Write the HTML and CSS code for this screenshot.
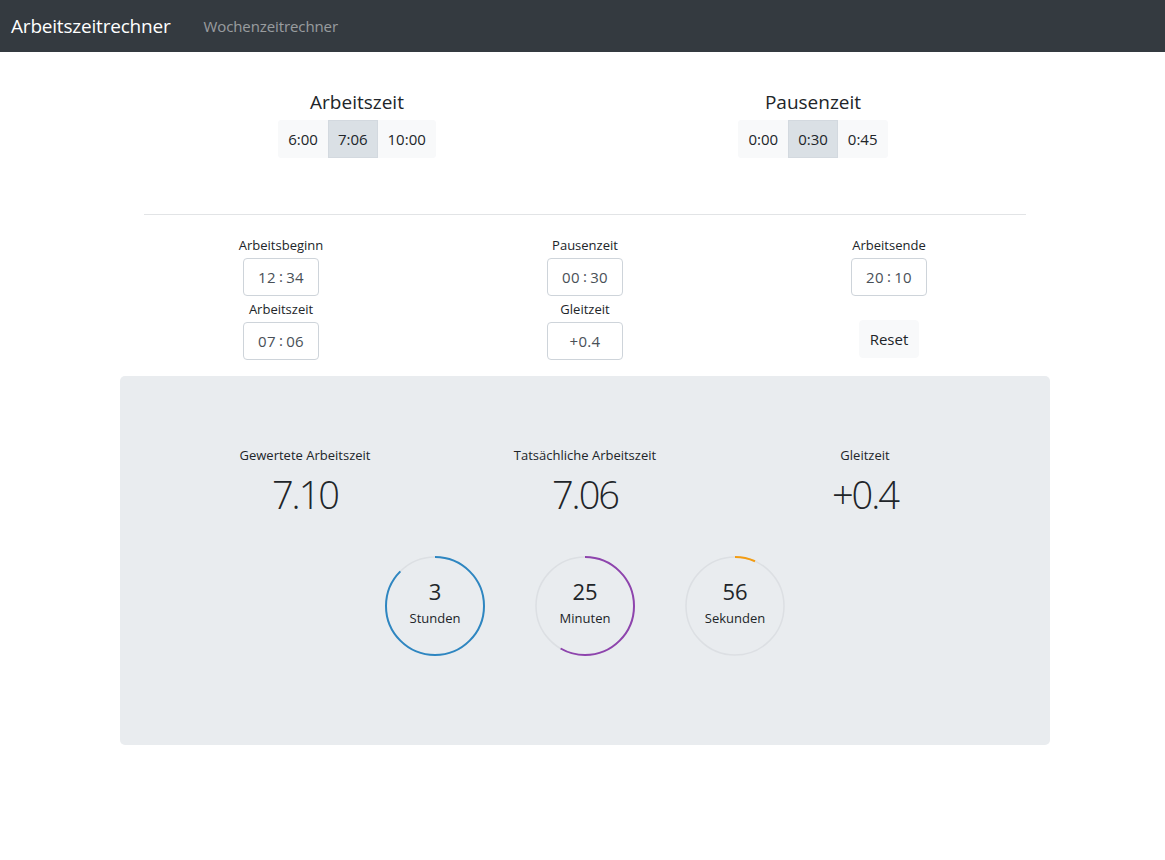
FILE: index.html
```html
<!DOCTYPE html>
<html lang="de">
<head>
<meta charset="utf-8">
<title>Arbeitszeitrechner</title>
<link rel="stylesheet" href="styles.css">
</head>
<body>
<nav class="navbar">
  <a class="brand" href="#">Arbeitszeitrechner</a>
  <a class="nav-link" href="#">Wochenzeitrechner</a>
</nav>

<main class="page">
  <section class="presets">
    <div class="preset">
      <h5 class="preset-title">Arbeitszeit</h5>
      <div class="btn-group">
        <button class="btn">6:00</button>
        <button class="btn active">7:06</button>
        <button class="btn">10:00</button>
      </div>
    </div>
    <div class="preset">
      <h5 class="preset-title">Pausenzeit</h5>
      <div class="btn-group">
        <button class="btn">0:00</button>
        <button class="btn active">0:30</button>
        <button class="btn">0:45</button>
      </div>
    </div>
  </section>

  <hr class="divider">

  <section class="inputs">
    <div class="field-col">
      <label class="field-label">Arbeitsbeginn</label>
      <div class="time-input">12<span class="sep">:</span>34</div>
      <label class="field-label">Arbeitszeit</label>
      <div class="time-input">07<span class="sep">:</span>06</div>
    </div>
    <div class="field-col">
      <label class="field-label">Pausenzeit</label>
      <div class="time-input">00<span class="sep">:</span>30</div>
      <label class="field-label">Gleitzeit</label>
      <div class="time-input">+0.4</div>
    </div>
    <div class="field-col">
      <label class="field-label">Arbeitsende</label>
      <div class="time-input">20<span class="sep">:</span>10</div>
      <button class="btn reset">Reset</button>
    </div>
  </section>

  <section class="result">
    <div class="stats">
      <div class="stat">
        <div class="stat-label">Gewertete Arbeitszeit</div>
        <div class="stat-value">7.10</div>
      </div>
      <div class="stat">
        <div class="stat-label">Tatsächliche Arbeitszeit</div>
        <div class="stat-value">7.06</div>
      </div>
      <div class="stat">
        <div class="stat-label">Gleitzeit</div>
        <div class="stat-value">+0.4</div>
      </div>
    </div>
    <div class="timers">
      <div class="timer">
        <svg class="ring" viewBox="0 0 102 102" width="102" height="102">
          <circle class="track" cx="51" cy="51" r="49"/>
          <circle class="arc arc-blue" cx="51" cy="51" r="49" pathLength="100" stroke-dasharray="87.5 100"/>
        </svg>
        <div class="timer-text"><span class="timer-num">3</span><span class="timer-unit">Stunden</span></div>
      </div>
      <div class="timer">
        <svg class="ring" viewBox="0 0 102 102" width="102" height="102">
          <circle class="track" cx="51" cy="51" r="49"/>
          <circle class="arc arc-purple" cx="51" cy="51" r="49" pathLength="100" stroke-dasharray="58.3 100"/>
        </svg>
        <div class="timer-text"><span class="timer-num">25</span><span class="timer-unit">Minuten</span></div>
      </div>
      <div class="timer">
        <svg class="ring" viewBox="0 0 102 102" width="102" height="102">
          <circle class="track" cx="51" cy="51" r="49"/>
          <circle class="arc arc-orange" cx="51" cy="51" r="49" pathLength="100" stroke-dasharray="6.7 100"/>
        </svg>
        <div class="timer-text"><span class="timer-num">56</span><span class="timer-unit">Sekunden</span></div>
      </div>
    </div>
  </section>
</main>
</body>
</html>
```

FILE: styles.css
```css
* { box-sizing: border-box; }

html, body {
  margin: 0;
  padding: 0;
  background: #fff;
  color: #212529;
  font-family: "Open Sans", "Noto Sans", "Liberation Sans", sans-serif;
  font-size: 16px;
}

.navbar {
  height: 52px;
  background: #343a40;
  display: flex;
  align-items: center;
  padding: 0 0 0 11px;
}

.brand {
  color: #fff;
  font-size: 19px;
  text-decoration: none;
  margin-right: 33px;
  letter-spacing: -0.2px;
}

.nav-link {
  color: rgba(255, 255, 255, 0.5);
  font-size: 15px;
  text-decoration: none;
  letter-spacing: -0.1px;
}

.page {
  width: 930px;
  margin-left: 120px;
}

.presets {
  display: grid;
  grid-template-columns: 456px 456px;
  justify-content: center;
  padding-top: 38px;
}

.preset {
  display: flex;
  flex-direction: column;
  align-items: center;
}

.preset-title {
  margin: 0 0 6px;
  font-size: 19px;
  font-weight: 400;
  line-height: 24px;
}

.btn-group {
  display: flex;
  border-radius: 4px;
  overflow: hidden;
}

.btn {
  font-family: inherit;
  font-size: 15px;
  color: #212529;
  background: #f8f9fa;
  border: 1px solid #f8f9fa;
  height: 38px;
  padding: 0 9px;
  cursor: pointer;
  line-height: 36px;
}

.btn.active {
  background: #dae0e5;
  border-color: #d3d9df;
}

.divider {
  width: 882px;
  margin: 56px auto 20px;
  border: 0;
  border-top: 1px solid #e2e4e6;
}

.inputs {
  display: grid;
  grid-template-columns: repeat(3, 304px);
  justify-content: center;
}

.field-col {
  display: flex;
  flex-direction: column;
  align-items: center;
}

.field-label {
  font-size: 13px;
  line-height: 20px;
  color: #212529;
  margin-bottom: 3px;
}

.time-input {
  width: 76px;
  height: 38px;
  border: 1px solid #ced4da;
  border-radius: 4px;
  background: #fff;
  color: #495057;
  font-size: 15px;
  display: flex;
  align-items: center;
  justify-content: center;
  margin-bottom: 3px;
  letter-spacing: 0.3px;
}

.time-input .sep {
  margin: 0 3px;
  position: relative;
  top: -1px;
}

.btn.reset {
  margin-top: 21px;
  width: 60px;
  padding: 0;
  border-radius: 4px;
}

.result {
  margin-top: 13px;
  background: #e9ecef;
  border-radius: 5px;
  height: 369px;
  padding-top: 69px;
}

.stats {
  display: grid;
  grid-template-columns: repeat(3, 280px);
  justify-content: center;
}

.stat {
  display: flex;
  flex-direction: column;
  align-items: center;
}

.stat-label {
  font-size: 13px;
  line-height: 20px;
}

.stat-value {
  font-size: 38px;
  font-weight: 300;
  line-height: 42px;
  margin-top: 8px;
  letter-spacing: -2px;
}

.timers {
  display: flex;
  justify-content: center;
  gap: 48px;
  margin-top: 40px;
}

.timer {
  position: relative;
  width: 102px;
  height: 102px;
}

.ring {
  display: block;
}

.track {
  fill: none;
  stroke: #dcdfe3;
  stroke-width: 1.5;
}

.arc {
  fill: none;
  stroke-width: 2;
  transform: rotate(-90deg);
  transform-origin: 51px 51px;
}

.arc-blue { stroke: #2e86c1; }
.arc-purple { stroke: #8e44ad; }
.arc-orange { stroke: #f39c12; }

.timer-text {
  position: absolute;
  inset: 0;
  display: flex;
  flex-direction: column;
  align-items: center;
  justify-content: center;
}

.timer-num {
  font-size: 22px;
  line-height: 28px;
  margin-top: -8px;
}

.timer-unit {
  font-size: 13px;
  line-height: 20px;
  margin-top: 3px;
}
```
